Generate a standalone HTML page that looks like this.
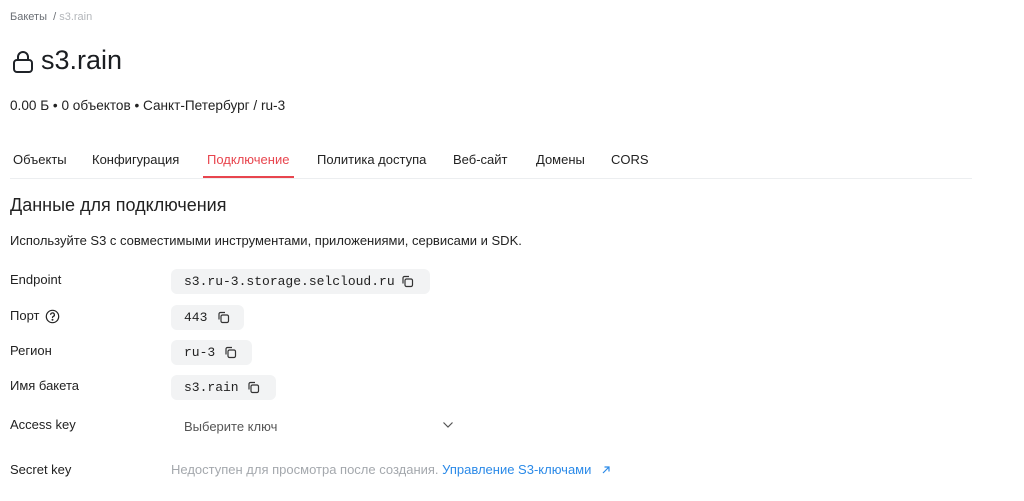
<!DOCTYPE html>
<html><head><meta charset="utf-8"><style>
body{margin:0;width:1024px;height:501px;background:#fff;font-family:"Liberation Sans",sans-serif;color:#1f2328;position:relative;overflow:hidden}
.a{position:absolute;white-space:nowrap}
.pill{position:absolute;background:#f2f3f4;border-radius:6px;height:25px;font-family:"Liberation Mono",monospace;font-size:13px;line-height:25px;padding-left:13px;color:#222;box-sizing:border-box}
.pill svg{position:absolute;top:6px}
.lbl{font-size:13px;color:#222}
.tab{font-size:13px;top:152px;color:#222}
</style></head><body>
<div class="a" style="left:10px;top:11px;font-size:11px;color:#6b6f75">Бакеты &nbsp;/ <span style="color:#b3b6ba">s3.rain</span></div>
<svg class="a" style="left:12px;top:50px" width="22" height="24" viewBox="0 0 22 24" fill="none" stroke="#1f2328" stroke-width="2"><rect x="2" y="10" width="18" height="12" rx="3"/><path d="M6 10V7a5 5 0 0 1 10 0v3"/></svg>
<div class="a" style="left:41px;top:45px;font-size:27px;color:#1a1d21">s3.rain</div>
<div class="a" style="left:10px;top:98px;font-size:13.6px;color:#222">0.00 Б • 0 объектов • Санкт-Петербург / ru-3</div>
<div class="a tab" style="left:13px">Объекты</div>
<div class="a tab" style="left:92px">Конфигурация</div>
<div class="a tab" style="left:207px;color:#e8454e">Подключение</div>
<div class="a tab" style="left:317px">Политика доступа</div>
<div class="a tab" style="left:453px">Веб-сайт</div>
<div class="a tab" style="left:536px">Домены</div>
<div class="a tab" style="left:611px">CORS</div>
<div class="a" style="left:10px;top:178px;width:962px;height:1px;background:#eceef0"></div>
<div class="a" style="left:203px;top:176px;width:91px;height:2px;background:#e8454e"></div>
<div class="a" style="left:10px;top:195px;font-size:18px;color:#222">Данные для подключения</div>
<div class="a" style="left:10px;top:233px;font-size:13px;color:#222">Используйте S3 с совместимыми инструментами, приложениями, сервисами и SDK.</div>
<div class="a lbl" style="left:10px;top:272px">Endpoint</div>
<div class="a lbl" style="left:10px;top:308px">Порт <svg style="vertical-align:-4px;margin-left:2px" width="15" height="15" viewBox="0 0 16 16" fill="none" stroke="#222" stroke-width="1.3"><circle cx="8" cy="8" r="6.6"/><path d="M6 6.2a2 2 0 1 1 2.6 1.9c-.4.2-.6.5-.6.9v.6"/><circle cx="8" cy="11.5" r=".4" fill="#222"/></svg></div>
<div class="a lbl" style="left:10px;top:343px">Регион</div>
<div class="a lbl" style="left:10px;top:378px">Имя бакета</div>
<div class="a lbl" style="left:10px;top:417px">Access key</div>
<div class="a lbl" style="left:10px;top:462px">Secret key</div>
<div class="pill" style="left:171px;top:269px;width:259px">s3.ru-3.storage.selcloud.ru<svg style="left:230px" width="13" height="13" viewBox="0 0 13 13" fill="none" stroke="#333" stroke-width="1.2"><rect x="4" y="4" width="7.5" height="7.5" rx="1.5"/><path d="M2 8.5V3a1.5 1.5 0 0 1 1.5-1.5H8"/></svg></div>
<div class="pill" style="left:171px;top:305px;width:73px">443<svg style="left:46px" width="13" height="13" viewBox="0 0 13 13" fill="none" stroke="#333" stroke-width="1.2"><rect x="4" y="4" width="7.5" height="7.5" rx="1.5"/><path d="M2 8.5V3a1.5 1.5 0 0 1 1.5-1.5H8"/></svg></div>
<div class="pill" style="left:171px;top:340px;width:81px">ru-3<svg style="left:53px" width="13" height="13" viewBox="0 0 13 13" fill="none" stroke="#333" stroke-width="1.2"><rect x="4" y="4" width="7.5" height="7.5" rx="1.5"/><path d="M2 8.5V3a1.5 1.5 0 0 1 1.5-1.5H8"/></svg></div>
<div class="pill" style="left:171px;top:375px;width:105px">s3.rain<svg style="left:76px" width="13" height="13" viewBox="0 0 13 13" fill="none" stroke="#333" stroke-width="1.2"><rect x="4" y="4" width="7.5" height="7.5" rx="1.5"/><path d="M2 8.5V3a1.5 1.5 0 0 1 1.5-1.5H8"/></svg></div>
<div class="a" style="left:184px;top:419px;font-size:13px;color:#555">Выберите ключ</div>
<svg class="a" style="left:442px;top:421px" width="12" height="8" viewBox="0 0 12 8" fill="none" stroke="#555" stroke-width="1.2"><path d="M1.5 1.5l4.5 4.5 4.5-4.5"/></svg>
<div class="a" style="left:171px;top:462px;font-size:13px;color:#a4a8ad">Недоступен для просмотра после создания. <span style="color:#2b8ae8">Управление S3-ключами</span></div>
<svg class="a" style="left:601px;top:465px" width="10" height="10" viewBox="0 0 10 10" fill="none" stroke="#2b8ae8" stroke-width="1.2"><path d="M2 8L8 2M3.5 2H8v4.5"/></svg>
</body></html>
